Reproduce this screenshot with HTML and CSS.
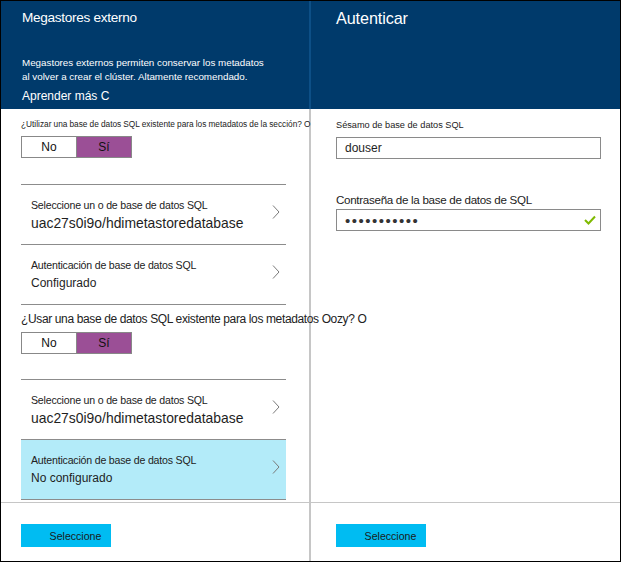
FILE: index.html
```html
<!DOCTYPE html>
<html lang="es">
<head>
<meta charset="utf-8">
<link rel="stylesheet" href="styles.css">
</head>
<body>
<div class="frame">
  <section class="panel left">
    <header class="head">
      <h1 class="title">Megastores externo</h1>
      <p class="desc">Megastores externos permiten conservar los metadatos<br>al volver a crear el clúster. Altamente recomendado.</p>
      <p class="learn">Aprender más C</p>
    </header>
    <div class="body">
      <p class="q1">¿Utilizar una base de datos SQL existente para los metadatos de la sección? O</p>
      <div class="toggle"><span class="opt">No</span><span class="opt on">Sí</span></div>
      <div class="list">
        <div class="item">
          <div class="txt"><div class="lbl">Seleccione un o de base de datos SQL</div><div class="val big">uac27s0i9o/hdimetastoredatabase</div></div>
          <svg class="chev" viewBox="0 0 8 14" width="8" height="14"><path d="M1 0.5 L7 7 L1 13.5" fill="none" stroke="#7a7a7a" stroke-width="1"/></svg>
        </div>
        <div class="item">
          <div class="txt"><div class="lbl">Autenticación de base de datos SQL</div><div class="val">Configurado</div></div>
          <svg class="chev" viewBox="0 0 8 14" width="8" height="14"><path d="M1 0.5 L7 7 L1 13.5" fill="none" stroke="#7a7a7a" stroke-width="1"/></svg>
        </div>
      </div>
      <p class="q2">¿Usar una base de datos SQL existente para los metadatos Oozy? O</p>
      <div class="toggle"><span class="opt">No</span><span class="opt on">Sí</span></div>
      <div class="list second">
        <div class="item">
          <div class="txt"><div class="lbl">Seleccione un o de base de datos SQL</div><div class="val big">uac27s0i9o/hdimetastoredatabase</div></div>
          <svg class="chev" viewBox="0 0 8 14" width="8" height="14"><path d="M1 0.5 L7 7 L1 13.5" fill="none" stroke="#7a7a7a" stroke-width="1"/></svg>
        </div>
        <div class="item active">
          <div class="txt"><div class="lbl">Autenticación de base de datos SQL</div><div class="val">No configurado</div></div>
          <svg class="chev" viewBox="0 0 8 14" width="8" height="14"><path d="M1 0.5 L7 7 L1 13.5" fill="none" stroke="#7a7a7a" stroke-width="1"/></svg>
        </div>
      </div>
    </div>
    <footer class="foot"><button class="btn">Seleccione</button></footer>
  </section>
  <div class="divider"></div>
  <section class="panel right">
    <header class="head">
      <h1 class="title big">Autenticar</h1>
    </header>
    <div class="body">
      <label class="flabel">Sésamo de base de datos SQL</label>
      <div class="field">douser</div>
      <label class="flabel lg">Contraseña de la base de datos de SQL</label>
      <div class="field pw"><span class="dots">•••••••••••</span>
        <svg class="check" viewBox="0 0 12 10" width="12" height="10"><path d="M1 5 L4.5 8.5 L11 1.5" fill="none" stroke="#7fba00" stroke-width="2"/></svg>
      </div>
    </div>
    <footer class="foot"><button class="btn">Seleccione</button></footer>
  </section>
</div>
</body>
</html>
```
FILE: styles.css
```css
* { box-sizing: border-box; }
html, body { margin: 0; padding: 0; background: #fff; }
body { font-family: "Liberation Sans", Arial, sans-serif; color: #1e1e1e; }
p, h1 { margin: 0; }

.frame {
  width: 621px;
  height: 562px;
  border: 1px solid #000;
  display: grid;
  grid-template-columns: 308px 2px 1fr;
  overflow: hidden;
}

.panel { display: flex; flex-direction: column; min-width: 0; }
.panel.left { position: relative; z-index: 1; }

.head {
  height: 108px;
  background: #003a6b;
  color: #fff;
  padding: 8px 0 0 21px;
  flex: none;
}
.right .head { padding-left: 25px; }
.title { font-weight: normal; font-size: 13.6px; line-height: 18px; letter-spacing: -0.3px; }
.title.big { font-size: 16.2px; line-height: 18px; letter-spacing: -0.1px; }
.desc { margin-top: 29px; font-size: 9.8px; line-height: 14px; }
.learn { margin-top: 4px; font-size: 12px; line-height: 16px; }

.divider { background: linear-gradient(#0d4f86 0 108px, #c6c6c6 108px); }

.body { flex: 1; padding: 9px 0 0 20px; }
.q1 { font-size: 8.3px; line-height: 12px; white-space: nowrap; word-spacing: -0.2px; color: #222; }
.q2 { margin-top: 7px; font-size: 12px; line-height: 14px; white-space: nowrap; letter-spacing: -0.37px; color: #222; }

.toggle {
  margin-top: 6px;
  width: 111px;
  height: 22px;
  border: 1px solid #888;
  display: flex;
}
.opt { flex: 1; display: flex; align-items: center; justify-content: center; font-size: 12px; color: #111; }
.opt.on { background: #9b4f96; border-left: 1px solid #888; }

.list { margin-top: 26px; width: 265px; border-top: 1px solid #8c8c8c; }
.list.second { margin-top: 25px; }
.item {
  height: 60px;
  border-bottom: 1px solid #8c8c8c;
  padding: 0 6px 0 10px;
  display: flex;
  align-items: center;
  justify-content: space-between;
}
.item.active { background: #b3ebf9; }
.txt { align-self: flex-start; padding-top: 13px; }
.lbl { font-size: 10.6px; line-height: 14px; letter-spacing: -0.2px; color: #222; }
.val { margin-top: 2px; font-size: 12px; line-height: 18px; color: #1e1e1e; }
.val.big { font-size: 13.9px; }
.chev { margin-bottom: 5px; flex: none; }

.right .body { padding: 10px 0 0 25px; }
.flabel { display: block; font-size: 9.2px; line-height: 13px; color: #222; }
.flabel.lg { margin-top: 33px; font-size: 11.6px; line-height: 15px; letter-spacing: -0.3px; }
.field {
  margin-top: 5px;
  width: 265px;
  height: 22px;
  border: 1px solid #8a8a8a;
  padding: 0 8px;
  display: flex;
  align-items: center;
  font-size: 12px;
  color: #1e1e1e;
}
.field.pw { margin-top: 2px; justify-content: space-between; padding-right: 4px; }
.dots { font-size: 15px; letter-spacing: 1.5px; color: #333; }
.check { flex: none; }

.foot {
  flex: none;
  height: 59px;
  border-top: 1px solid #c6c6c6;
  padding: 21px 0 0 20px;
}
.right .foot { padding-left: 25px; }
.btn {
  width: 90px;
  height: 23px;
  border: 0;
  background: #00bcf2;
  font-family: "Liberation Sans", Arial, sans-serif;
  font-size: 10.6px;
  color: #1a1a1a;
  padding: 0 0 0 19px;
  text-align: center;
}
```
